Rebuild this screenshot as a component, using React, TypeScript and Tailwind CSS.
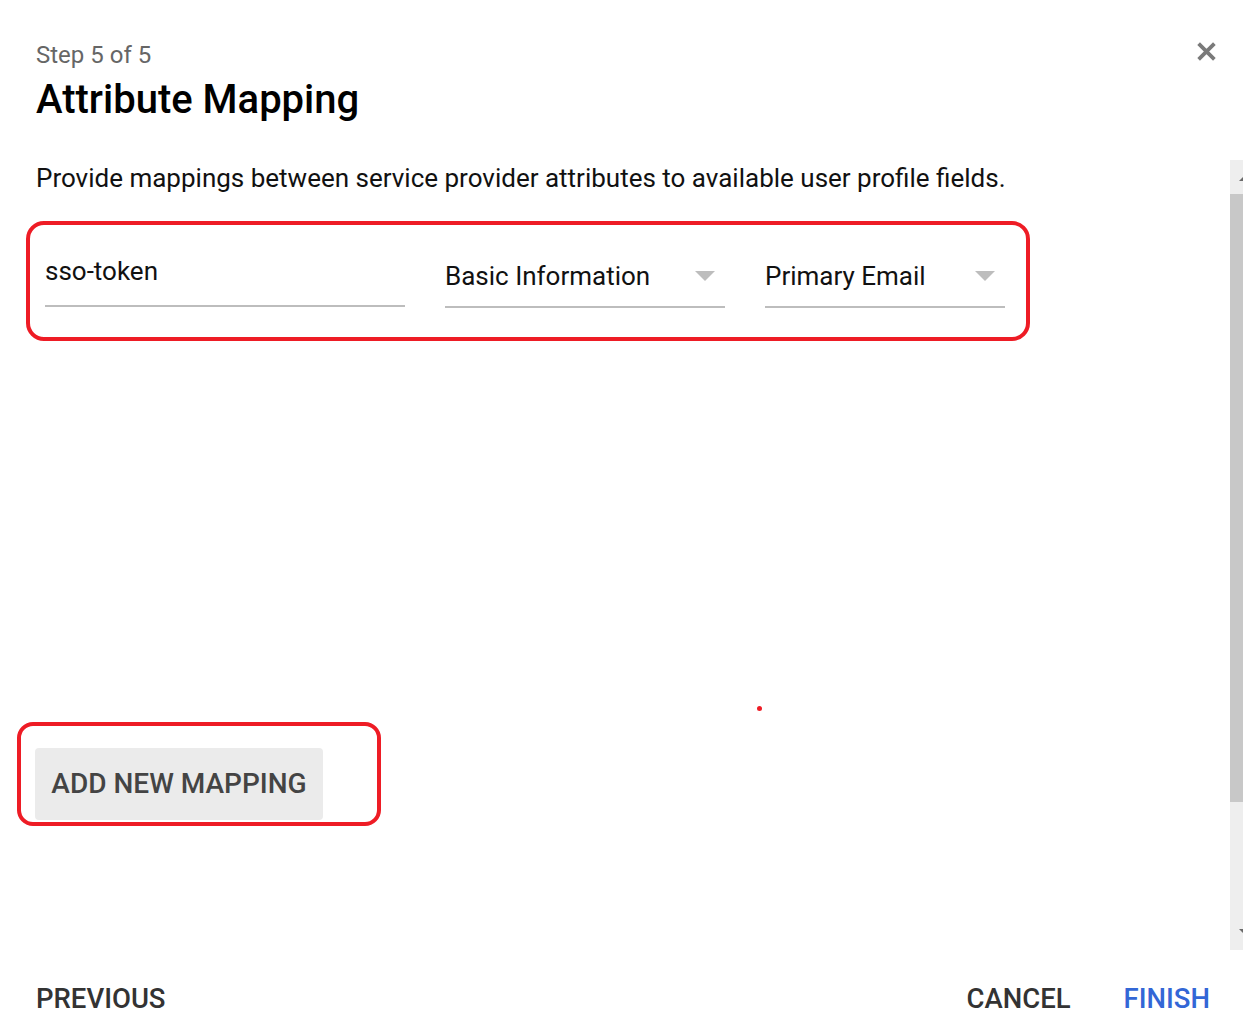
import React from "react";

function Caret() {
  return (
    <svg width="20" height="10" viewBox="0 0 20 10" className="shrink-0 mt-[11px]">
      <path d="M0 0 L20 0 L10 10 Z" fill="#bdbdbd" />
    </svg>
  );
}

export default function App() {
  return (
    <div
      className="relative w-[1243px] h-[1015px] overflow-hidden bg-white flex flex-col"
      style={{ fontFamily: "Roboto, 'Noto Sans', sans-serif" }}
    >
      {/* header */}
      <div className="relative pl-[36px] pt-[40px] h-[160px] shrink-0">
        <div className="text-[24px] leading-[30px] text-[#666666]">Step 5 of 5</div>
        <div className="mt-[6px] text-[40px] leading-[48px] font-medium text-black">
          Attribute Mapping
        </div>
        <button className="absolute left-[1191px] top-[36px] w-[30px] h-[30px] flex items-center justify-center">
          <svg width="21" height="21" viewBox="0 0 20 20">
            <path d="M2.5 2.5 L17.5 17.5 M17.5 2.5 L2.5 17.5" stroke="#7a7a7a" strokeWidth="3.6" strokeLinecap="butt" />
          </svg>
        </button>
      </div>

      {/* scroll area */}
      <div className="flex h-[790px] shrink-0">
        <div className="flex-1 relative">
          <div className="pl-[36px] pt-[2px] text-[26px] leading-[32px] text-[#111111]">
            Provide mappings between service provider attributes to available user profile fields.
          </div>

          <div className="ml-[26px] mt-[27px] w-[1004px] h-[120px] border-[4px] border-[#ee1c25] rounded-[18px] flex items-start pl-[15px] pt-[25px]">
            <div className="w-[360px] h-[57px] border-b-2 border-[#bdbdbd] flex items-start pt-[5px]">
              <span className="text-[26px] leading-[32px] text-[#111111]">sso-token</span>
            </div>
            <div className="ml-[40px] w-[280px] h-[58px] border-b-2 border-[#bdbdbd] flex items-start justify-between pr-[10px] pt-[10px]">
              <span className="text-[26px] leading-[32px] text-[#111111]">Basic Information</span>
              <Caret />
            </div>
            <div className="ml-[40px] w-[240px] h-[58px] border-b-2 border-[#bdbdbd] flex items-start justify-between pr-[10px] pt-[10px]">
              <span className="text-[26px] leading-[32px] text-[#111111]">Primary Email</span>
              <Caret />
            </div>
          </div>

          <div className="absolute left-[757px] top-[546px] w-[5px] h-[5px] rounded-full bg-[#ee1c25]" />

          <div className="ml-[17px] mt-[381px] w-[364px] h-[104px] border-[4px] border-[#ee1c25] rounded-[16px] pl-[14px] pt-[22px]">
            <button className="w-[288px] h-[72px] bg-[#ebebeb] rounded-[4px] text-[28px] font-medium text-[#444444] flex items-center justify-center">
              ADD NEW MAPPING
            </button>
          </div>
        </div>

        {/* scrollbar */}
        <div className="w-[13px] bg-[#eeeeee] flex flex-col">
          <div className="h-[34px] relative">
            <div className="absolute right-0 top-[17px] w-0 h-0 border-l-[4px] border-r-[4px] border-b-[4px] border-l-transparent border-r-transparent border-b-[#6a6a6a] translate-x-[4px]" />
          </div>
          <div className="h-[608px] bg-[#c8c8c8]" />
          <div className="flex-1 relative">
            <div className="absolute right-0 bottom-[17px] w-0 h-0 border-l-[4px] border-r-[4px] border-t-[4px] border-l-transparent border-r-transparent border-t-[#6a6a6a] translate-x-[4px]" />
          </div>
        </div>
      </div>

      {/* footer */}
      <div className="flex-1 flex items-start pl-[36px] pr-[33px] pt-[33px]">
        <button className="text-[27.5px] leading-[32px] font-medium text-[#333333]">PREVIOUS</button>
        <div className="flex-1" />
        <button className="text-[27.5px] leading-[32px] font-medium text-[#333333]">CANCEL</button>
        <button className="ml-[53px] text-[27.5px] leading-[32px] font-medium text-[#3367d6]">FINISH</button>
      </div>
    </div>
  );
}
